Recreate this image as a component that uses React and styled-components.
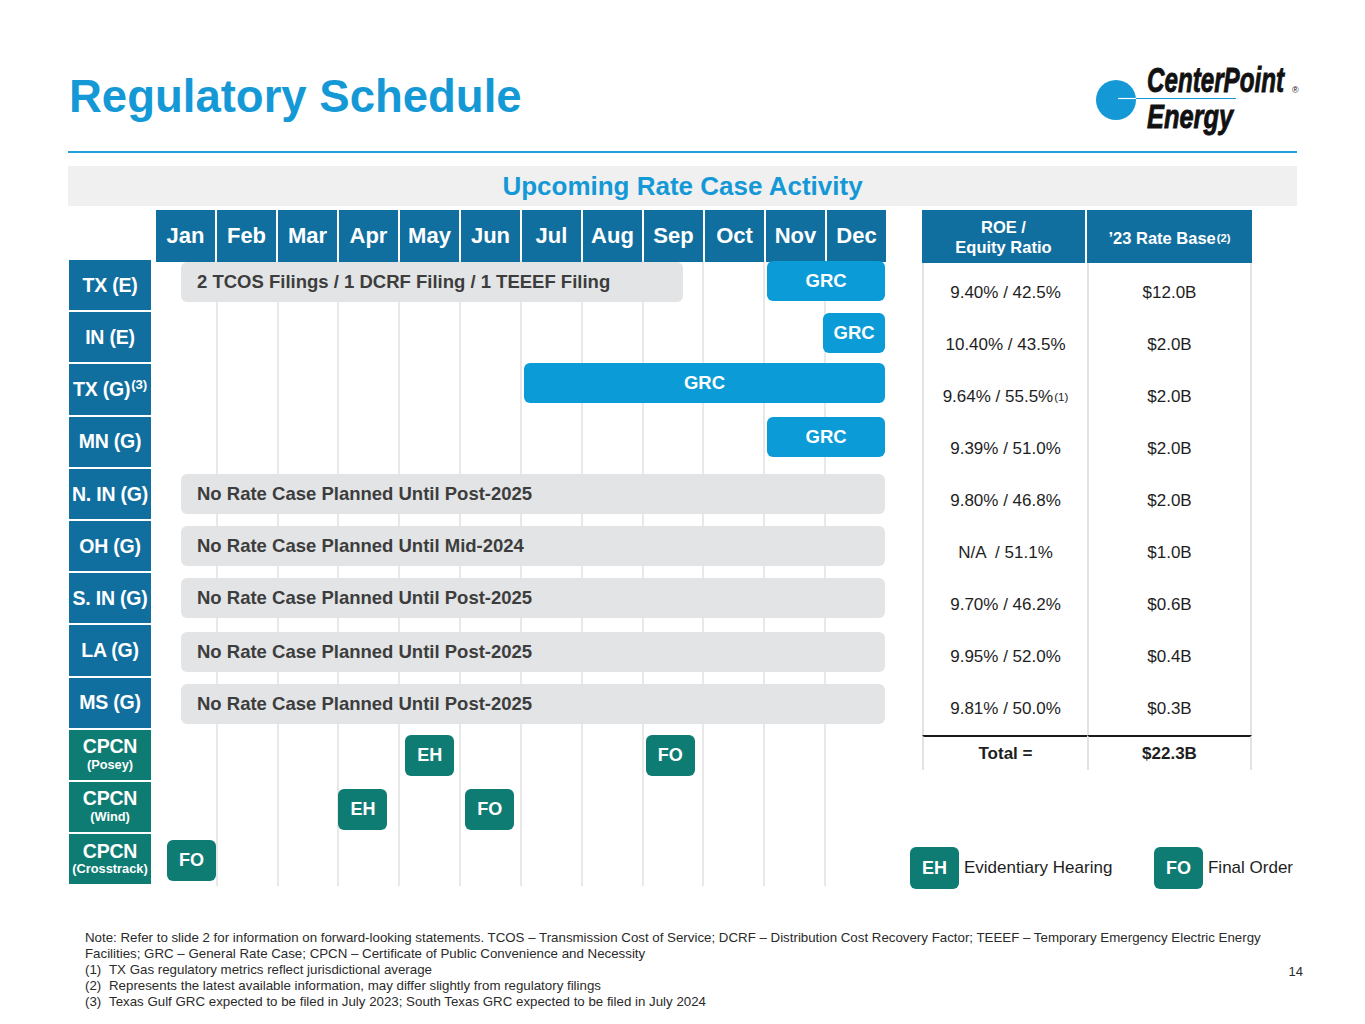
import React from "react";
import styled, { createGlobalStyle } from "styled-components";

const BLUE = "#1599d6";
const NAVY = "#116fa0";
const TEAL = "#0f7c73";

const GlobalStyle = createGlobalStyle`
  body {
    margin: 0;
    background: #ffffff;
    font-family: "Liberation Sans", Arial, sans-serif;
  }
`;

const months = ["Jan", "Feb", "Mar", "Apr", "May", "Jun", "Jul", "Aug", "Sep", "Oct", "Nov", "Dec"];

const labels = [
  { name: "TX (E)" },
  { name: "IN (E)" },
  { name: "TX (G)", sup: "(3)" },
  { name: "MN (G)" },
  { name: "N. IN (G)" },
  { name: "OH (G)" },
  { name: "S. IN (G)" },
  { name: "LA (G)" },
  { name: "MS (G)" },
  { name: "CPCN", sub: "(Posey)", teal: true },
  { name: "CPCN", sub: "(Wind)", teal: true },
  { name: "CPCN", sub: "(Crosstrack)", teal: true },
];

const NOTE = "No Rate Case Planned Until Post-2025";

// row, from/to = grid columns, ml/mr = margins inside the month span, dy = vertical nudge
const bars = [
  { row: 1, from: 1, to: 10, ml: 25, mr: 20, dy: -4, tone: "note", text: "2 TCOS Filings / 1 DCRF Filing / 1 TEEEF Filing" },
  { row: 1, from: 11, to: 13, ml: 3, mr: 1, dy: -5, tone: "grc", text: "GRC" },
  { row: 2, from: 12, to: 13, ml: -2, mr: 1, dy: -5, tone: "grc", text: "GRC" },
  { row: 3, from: 7, to: 13, ml: 3, mr: 1, dy: -7, tone: "grc", text: "GRC" },
  { row: 4, from: 11, to: 13, ml: 3, mr: 1, dy: -6, tone: "grc", text: "GRC" },
  { row: 5, from: 1, to: 13, ml: 25, mr: 1, dy: -1, tone: "note", text: NOTE },
  { row: 6, from: 1, to: 13, ml: 25, mr: 1, dy: -1, tone: "note", text: "No Rate Case Planned Until Mid-2024" },
  { row: 7, from: 1, to: 13, ml: 25, mr: 1, dy: -1, tone: "note", text: NOTE },
  { row: 8, from: 1, to: 13, ml: 25, mr: 1, dy: 1, tone: "note", text: NOTE },
  { row: 9, from: 1, to: 13, ml: 25, mr: 1, dy: 0, tone: "note", text: NOTE },
  { row: 10, from: 5, to: 6, ml: 6, mr: 0, dy: 0, tone: "mark", text: "EH" },
  { row: 10, from: 9, to: 10, ml: 3, mr: 0, dy: 0, tone: "mark", text: "FO" },
  { row: 11, from: 4, to: 5, ml: 0, mr: 0, dy: 2, tone: "mark", text: "EH" },
  { row: 11, from: 6, to: 7, ml: 5, mr: 0, dy: 2, tone: "mark", text: "FO" },
  { row: 12, from: 1, to: 2, ml: 11, mr: 0, dy: 0, tone: "mark", text: "FO" },
];

const tableRows = [
  { roe: "9.40% / 42.5%", base: "$12.0B" },
  { roe: "10.40% / 43.5%", base: "$2.0B" },
  { roe: "9.64% / 55.5%", sup: "(1)", base: "$2.0B" },
  { roe: "9.39% / 51.0%", base: "$2.0B" },
  { roe: "9.80% / 46.8%", base: "$2.0B" },
  { roe: "N/A  / 51.1%", base: "$1.0B" },
  { roe: "9.70% / 46.2%", base: "$0.6B" },
  { roe: "9.95% / 52.0%", base: "$0.4B" },
  { roe: "9.81% / 50.0%", base: "$0.3B" },
];

const Logo = () => (
  <LogoSvg width="212" height="82" viewBox="0 0 212 82">
    <circle cx="24" cy="40" r="20" fill={BLUE} />
    <line x1="26" y1="38.5" x2="44" y2="38.5" stroke="#ffffff" strokeWidth="1.2" />
    <line x1="44" y1="38.5" x2="144" y2="38.5" stroke={BLUE} strokeWidth="1.2" />
    <text
      x="55"
      y="32"
      fontFamily="'Liberation Sans Narrow', 'Liberation Sans', Arial, sans-serif"
      fontSize="35"
      fontWeight="700"
      fontStyle="italic"
      textLength="137"
      lengthAdjust="spacingAndGlyphs"
      fill="#111"
      stroke="#111"
      strokeWidth="0.9"
    >
      CenterPoint
    </text>
    <text
      x="55"
      y="68"
      fontFamily="'Liberation Sans Narrow', 'Liberation Sans', Arial, sans-serif"
      fontSize="34"
      fontWeight="700"
      fontStyle="italic"
      textLength="86"
      lengthAdjust="spacingAndGlyphs"
      fill="#111"
      stroke="#111"
      strokeWidth="0.9"
    >
      Energy
    </text>
    <text x="200" y="33" fontFamily="'Liberation Sans', Arial, sans-serif" fontSize="9" fill="#111">
      ®
    </text>
  </LogoSvg>
);

const App = () => {
  return (
    <Slide>
      <GlobalStyle />
      <Header>
        <Title>Regulatory Schedule</Title>
        <Logo />
      </Header>
      <Band>Upcoming Rate Case Activity</Band>

      <Main>
        <Schedule>
          <Corner />
          <MonthRow>
            {months.map((m) => (
              <Month key={m}>{m}</Month>
            ))}
          </MonthRow>
          {labels.map((l, i) => (
            <Label key={i} $teal={l.teal}>
              <span>
                {l.name}
                {l.sup && <Sup>{l.sup}</Sup>}
              </span>
              {l.sub && <SubLabel>{l.sub}</SubLabel>}
            </Label>
          ))}
          <Timeline>
            {months.map((m, i) => (
              <GridCol key={m} $col={i + 1} $last={i === 11} />
            ))}
            {bars.map((b, i) => (
              <Bar
                key={i}
                $tone={b.tone}
                $row={b.row}
                $from={b.from}
                $to={b.to}
                $ml={b.ml}
                $mr={b.mr}
                $dy={b.dy}
              >
                {b.text}
              </Bar>
            ))}
          </Timeline>
        </Schedule>

        <Side>
          <Table>
            <HeadCell>
              ROE /
              <br />
              Equity Ratio
            </HeadCell>
            <HeadCell>
              ’23 Rate Base<Sup>(2)</Sup>
            </HeadCell>
            <Spacer />
            <Spacer $right />
            {tableRows.map((r, i) => (
              <React.Fragment key={i}>
                <Cell>
                  {r.roe}
                  {r.sup && <Sup>{r.sup}</Sup>}
                </Cell>
                <Cell $right>{r.base}</Cell>
              </React.Fragment>
            ))}
            <TotalCell>Total =</TotalCell>
            <TotalCell $right>$22.3B</TotalCell>
          </Table>

          <Legend>
            <LegendItem>
              <Marker>EH</Marker>
              Evidentiary Hearing
            </LegendItem>
            <LegendItem>
              <Marker>FO</Marker>
              Final Order
            </LegendItem>
          </Legend>
        </Side>
      </Main>

      <Footer>
        <Notes>
          <div>
            Note: Refer to slide 2 for information on forward-looking statements. TCOS – Transmission Cost of Service; DCRF –
            Distribution Cost Recovery Factor; TEEEF – Temporary Emergency Electric Energy
          </div>
          <div>Facilities; GRC – General Rate Case; CPCN – Certificate of Public Convenience and Necessity</div>
          <NoteItem>
            <span>(1)</span>TX Gas regulatory metrics reflect jurisdictional average
          </NoteItem>
          <NoteItem>
            <span>(2)</span>Represents the latest available information, may differ slightly from regulatory filings
          </NoteItem>
          <NoteItem>
            <span>(3)</span>Texas Gulf GRC expected to be filed in July 2023; South Texas GRC expected to be filed in July 2024
          </NoteItem>
        </Notes>
        <PageNum>14</PageNum>
      </Footer>
    </Slide>
  );
};

export default App;

const Slide = styled.div`
  width: 1365px;
  height: 1024px;
  box-sizing: border-box;
  padding: 0 68px;
  overflow: hidden;
`;

const Header = styled.header`
  display: flex;
  justify-content: space-between;
  align-items: flex-start;
  height: 151px;
  border-bottom: 2px solid #22a0da;
`;

const Title = styled.h1`
  margin: 71px 0 0 1px;
  font-size: 45.5px;
  line-height: 52px;
  font-weight: 700;
  color: ${BLUE};
`;

const LogoSvg = styled.svg`
  display: block;
  margin: 60px -7px 0 0;
`;

const Band = styled.div`
  margin-top: 13px;
  height: 40px;
  background: #f0f0f0;
  display: flex;
  align-items: center;
  justify-content: center;
  font-size: 26px;
  font-weight: 700;
  color: ${BLUE};
`;

const Main = styled.div`
  display: flex;
  margin-top: 4px;
`;

const Schedule = styled.div`
  display: grid;
  grid-template-columns: 82px 730px;
  grid-template-rows: 50px repeat(12, 52.2px);
  column-gap: 5px;
  margin-left: 1px;
`;

const Corner = styled.div`
  grid-column: 1;
  grid-row: 1;
`;

const MonthRow = styled.div`
  grid-column: 2;
  grid-row: 1;
  display: grid;
  grid-template-columns: repeat(12, 1fr);
  column-gap: 2px;
  height: 52px;
  position: relative;
  z-index: 1;
`;

const Month = styled.div`
  background: ${NAVY};
  color: #ffffff;
  font-size: 22px;
  font-weight: 700;
  display: flex;
  align-items: center;
  justify-content: center;
`;

const Label = styled.div`
  grid-column: 1;
  margin-bottom: 2px;
  background: ${(p) => (p.$teal ? TEAL : NAVY)};
  color: #ffffff;
  font-size: 19.5px;
  font-weight: 700;
  display: flex;
  flex-direction: column;
  align-items: center;
  justify-content: center;
  line-height: 1.05;
  white-space: nowrap;
  letter-spacing: -0.2px;
`;

const SubLabel = styled.span`
  font-size: 12.8px;
  line-height: 1.3;
  letter-spacing: 0;
`;

const Sup = styled.sup`
  font-size: 0.68em;
  vertical-align: super;
  line-height: 0;
  font-weight: inherit;
  margin-left: 1px;
`;

const Timeline = styled.div`
  grid-column: 2;
  grid-row: 2 / span 12;
  display: grid;
  grid-template-columns: repeat(12, minmax(0, 1fr));
  grid-template-rows: repeat(12, minmax(0, 1fr));
  padding-bottom: 4px;
  margin-bottom: -4px;
`;

const GridCol = styled.div`
  grid-column: ${(p) => p.$col};
  grid-row: 1 / -1;
  border-right: ${(p) => (p.$last ? "none" : "2px solid #e8e8e8")};
  margin-right: -1px;
`;

const toneBg = { note: "#e2e4e6", grc: "#0b9bd7", mark: TEAL };

const Bar = styled.div`
  grid-row: ${(p) => p.$row};
  grid-column: ${(p) => p.$from} / ${(p) => p.$to};
  align-self: center;
  justify-self: ${(p) => (p.$tone === "mark" ? "start" : "stretch")};
  width: ${(p) => (p.$tone === "mark" ? "49px" : "auto")};
  height: ${(p) => (p.$tone === "mark" ? "41px" : "40px")};
  margin-left: ${(p) => p.$ml}px;
  margin-right: ${(p) => p.$mr}px;
  margin-top: ${(p) => Math.max(0, p.$dy * 2)}px;
  margin-bottom: ${(p) => Math.max(0, -p.$dy * 2)}px;
  box-sizing: border-box;
  border-radius: 6px;
  background: ${(p) => toneBg[p.$tone]};
  color: ${(p) => (p.$tone === "note" ? "#3d3d3d" : "#ffffff")};
  font-size: ${(p) => (p.$tone === "mark" ? "18px" : "18.5px")};
  font-weight: 700;
  display: flex;
  align-items: center;
  justify-content: ${(p) => (p.$tone === "note" ? "flex-start" : "center")};
  padding-left: ${(p) => (p.$tone === "note" ? "16px" : "0")};
  white-space: nowrap;
  position: relative;
  z-index: 1;
`;

const Side = styled.div`
  flex: 1;
  margin-left: 24px;
  display: flex;
  flex-direction: column;
`;

const Table = styled.div`
  display: grid;
  grid-template-columns: 165px 165px;
  width: 330px;
  margin-left: 12px;
`;

const HeadCell = styled.div`
  height: 53px;
  background: ${NAVY};
  color: #ffffff;
  font-size: 16.5px;
  font-weight: 700;
  line-height: 20px;
  display: flex;
  align-items: center;
  justify-content: center;
  text-align: center;
  border-right: 2px solid #ffffff;
  &:nth-child(2) {
    border-right: none;
    padding-top: 2px;
    box-sizing: border-box;
  }
`;

const Spacer = styled.div`
  height: 4px;
  border-left: 2px solid #e3e3e3;
  border-right: ${(p) => (p.$right ? "2px solid #e3e3e3" : "none")};
`;

const Cell = styled.div`
  height: 52px;
  display: flex;
  align-items: center;
  justify-content: center;
  font-size: 17px;
  color: #1e1e1e;
  white-space: pre;
  border-left: 2px solid #e3e3e3;
  border-right: ${(p) => (p.$right ? "2px solid #e3e3e3" : "none")};
`;

const TotalCell = styled(Cell)`
  height: 33px;
  font-weight: 700;
  border-top: 2px solid #1a1a1a;
`;

const Legend = styled.div`
  margin-top: auto;
  margin-bottom: -3px;
  display: flex;
  justify-content: space-between;
  align-items: center;
`;

const LegendItem = styled.div`
  display: flex;
  align-items: center;
  gap: 5px;
  font-size: 17px;
  color: #1e1e1e;
  &:last-child {
    margin-right: 4px;
  }
`;

const Marker = styled.span`
  width: 49px;
  height: 42px;
  border-radius: 6px;
  background: ${TEAL};
  color: #ffffff;
  font-size: 18px;
  font-weight: 700;
  display: flex;
  align-items: center;
  justify-content: center;
`;

const Footer = styled.footer`
  display: flex;
  justify-content: space-between;
  align-items: center;
  margin-top: 44px;
  padding-left: 17px;
`;

const Notes = styled.div`
  font-size: 13.3px;
  line-height: 16px;
  color: #2a2a2a;
`;

const NoteItem = styled.div`
  display: flex;
  span {
    width: 24px;
    flex: none;
  }
`;

const PageNum = styled.div`
  font-size: 13px;
  color: #2a2a2a;
  margin-right: -6px;
  margin-top: 2px;
`;
